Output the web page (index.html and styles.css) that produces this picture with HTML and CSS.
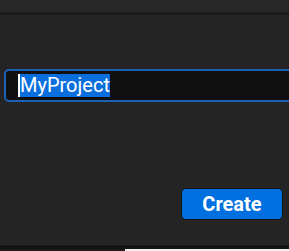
FILE: index.html
```html
<!DOCTYPE html>
<html lang="en">
<head>
    <meta charset="UTF-8">
    <meta name="viewport" content="width=device-width, initial-scale=1.0">
    <title>New Project</title>
    <link rel="stylesheet" href="styles.css">
</head>
<body>
    <div class="topbar"></div>

    <div class="dialog">
        <div class="name-field">
            <span class="caret"></span><span class="selected">MyProject</span>
        </div>

        <div class="button-row">
            <button class="create-btn">Create</button>
        </div>
    </div>

    <div class="statusbar">
        <div class="status-left"></div>
        <div class="status-right"></div>
    </div>
</body>
</html>
```

FILE: styles.css
```css
html, body {
    margin: 0;
    height: 100%;
}

body {
    font-family: Roboto, "Liberation Sans", sans-serif;
    background-color: #242424;
    display: flex;
    flex-direction: column;
    overflow: hidden;
}

.topbar {
    height: 12px;
    background: #272727;
    border-bottom: 3px solid #1a1a1a;
    flex-shrink: 0;
}

.dialog {
    flex: 1;
    padding-top: 54px;
    display: flex;
    flex-direction: column;
    overflow: hidden;
}

/* field runs on past the right edge, like the original */
.name-field {
    margin-left: 4px;
    margin-right: -12px;
    height: 29px;
    border: 2px solid #1d61b4;
    border-radius: 5px;
    background: #0f0f0f;
    display: flex;
    align-items: center;
    padding-left: 12px;
}

.caret {
    width: 2px;
    height: 23px;
    background: #ffffff;
}

.selected {
    background: #0a6fdc;
    color: #ffffff;
    font-size: 20px;
    line-height: 23px;
    height: 23px;
}

.button-row {
    display: flex;
    justify-content: flex-end;
    padding-right: 6px;
    margin-top: 86px;
}

.create-btn {
    width: 102px;
    height: 32px;
    background: #0070e0;
    color: #ffffff;
    font-family: Roboto, "Liberation Sans", sans-serif;
    font-size: 20px;
    font-weight: bold;
    border: 1px solid #151515;
    border-radius: 5px;
    padding: 0;
}

.statusbar {
    height: 6px;
    border-top: 1px solid #2c2c2c;
    display: flex;
    align-items: flex-end;
    background: #141414;
    flex-shrink: 0;
}

.status-left {
    width: 125px;
    height: 2px;
    background: #1c1c1c;
}

.status-right {
    flex: 1;
    height: 2px;
    background: #f0f0f0;
}
```
